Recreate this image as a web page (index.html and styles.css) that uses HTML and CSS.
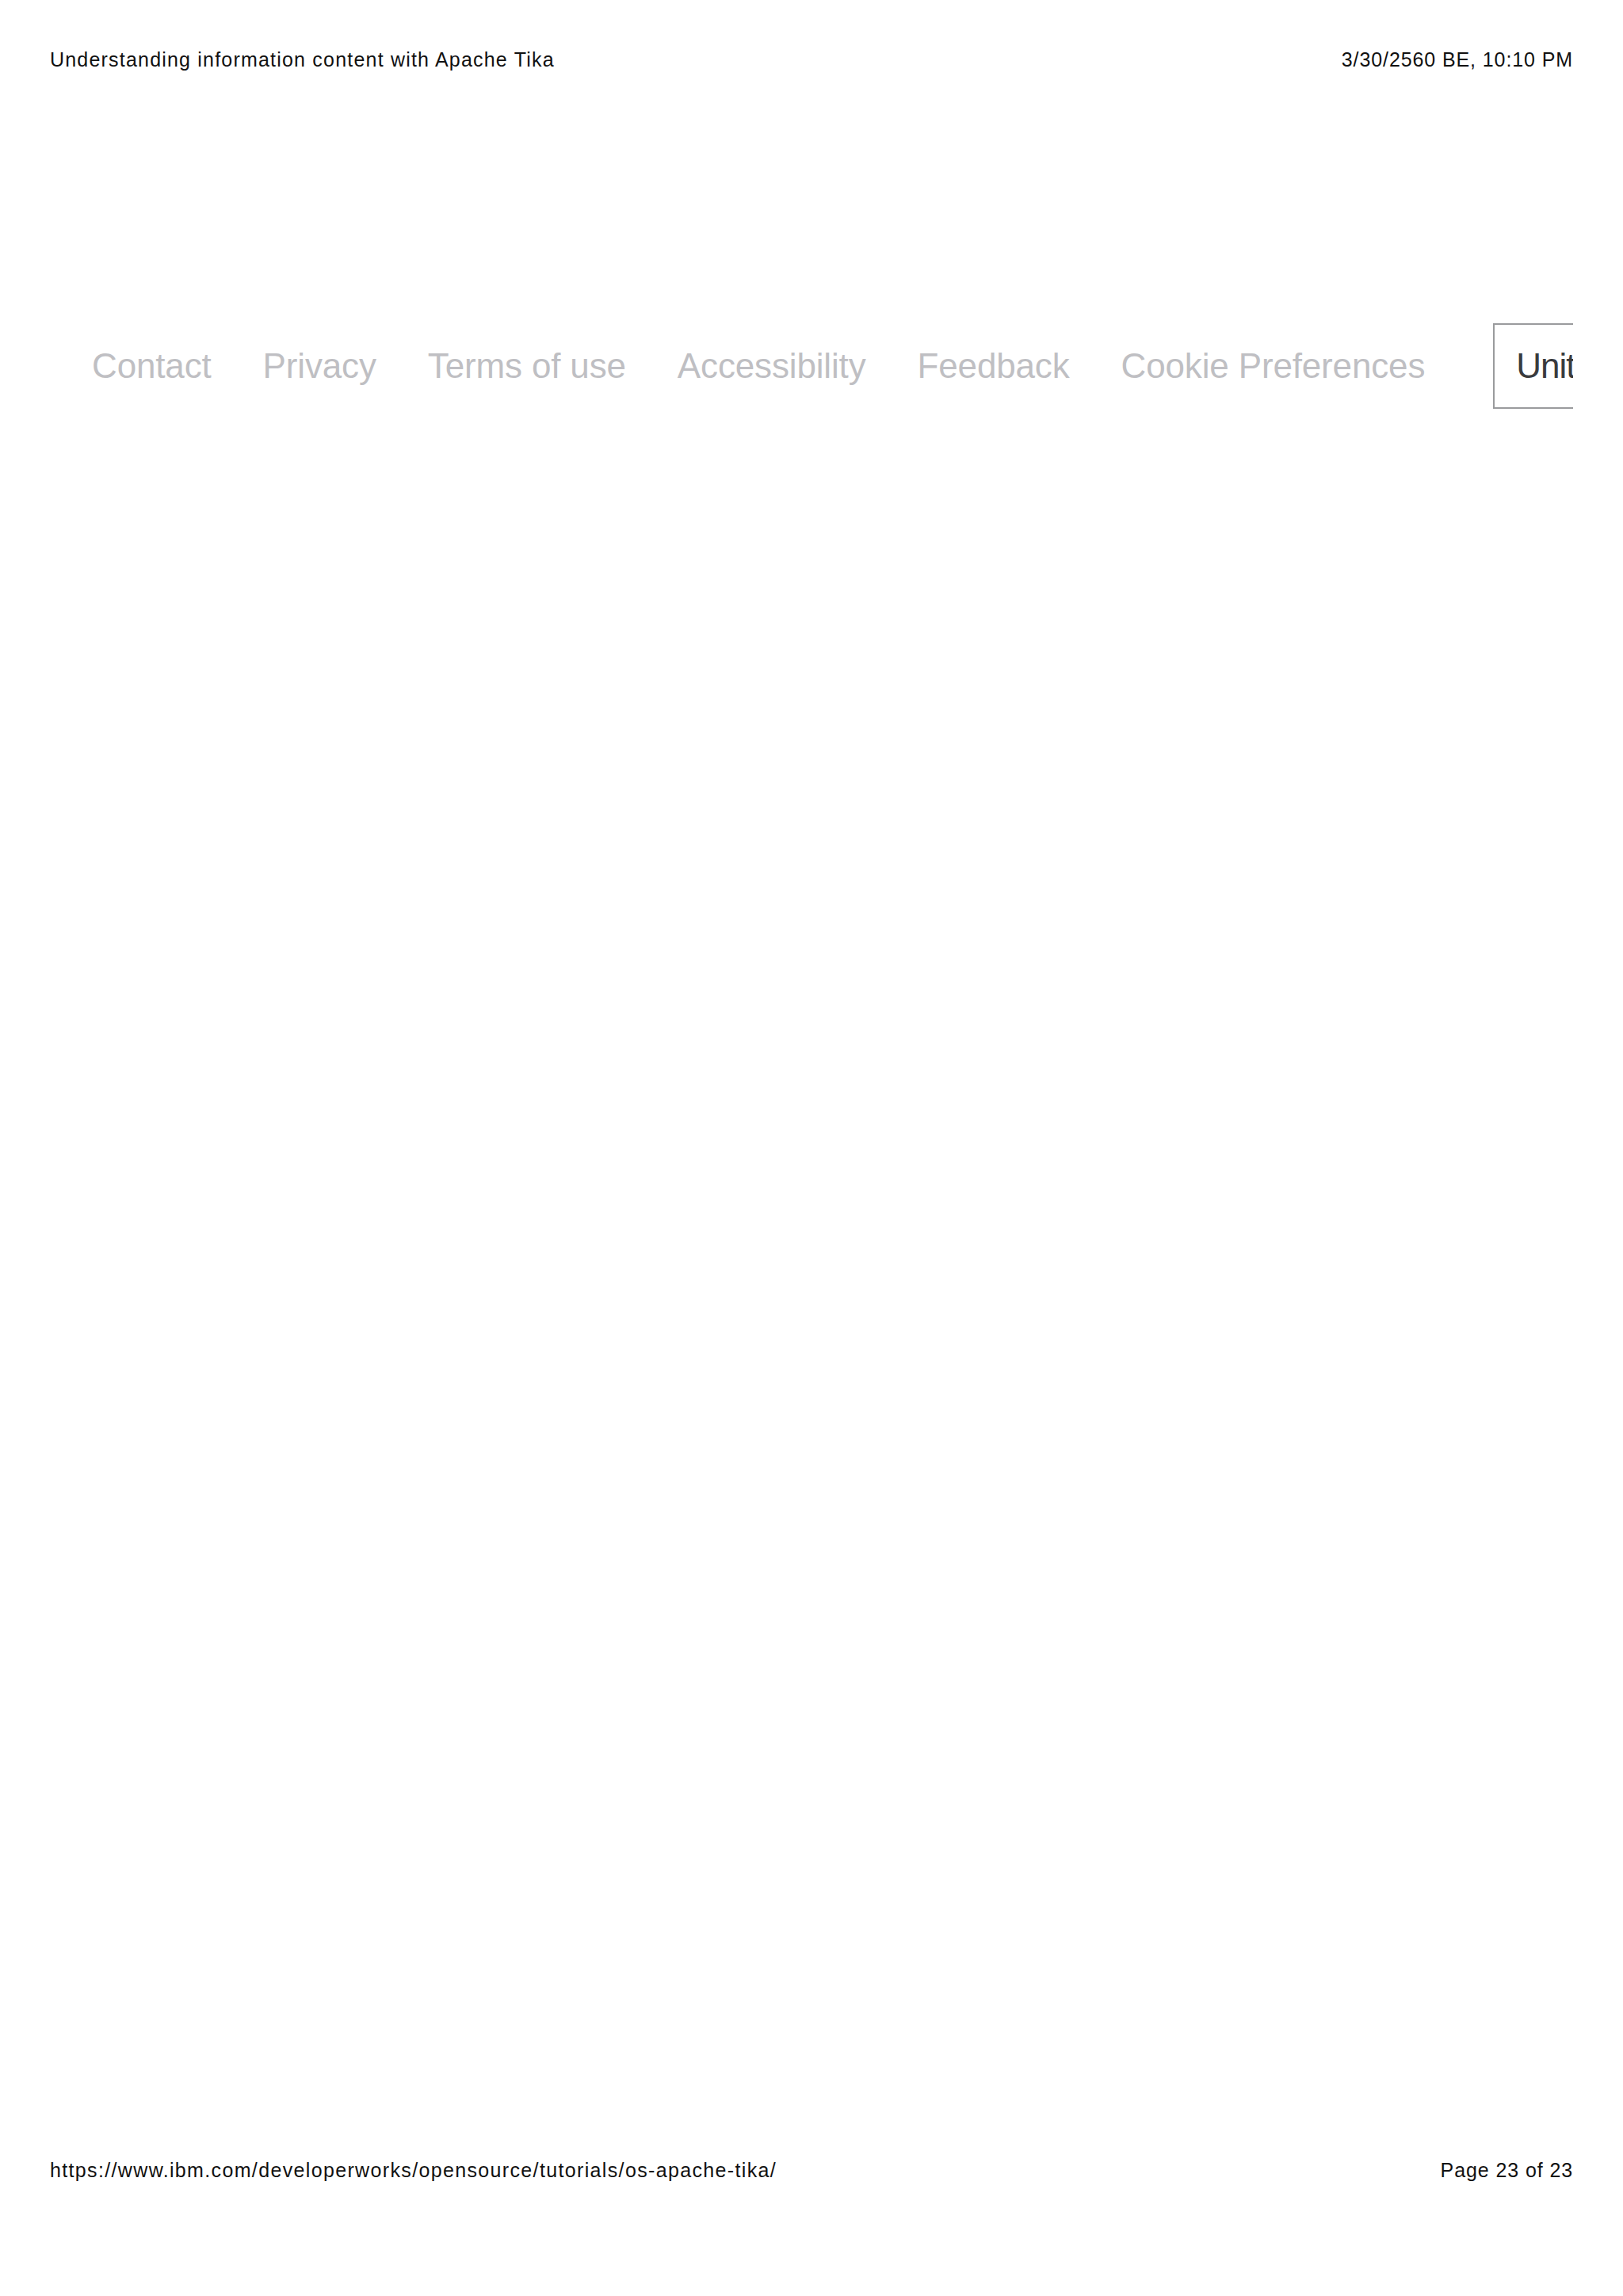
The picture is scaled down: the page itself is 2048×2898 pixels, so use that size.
FILE: index.html
```html
<!DOCTYPE html>
<html lang="en">
<head>
<meta charset="utf-8">
<title>Understanding information content with Apache Tika</title>
<link rel="stylesheet" href="styles.css">
</head>
<body>
<div class="page">
  <header class="print-header">
    <span class="print-title">Understanding information content with Apache Tika</span>
    <span class="print-date">3/30/2560 BE, 10:10 PM</span>
  </header>
  <main class="content">
    <nav class="footer-links">
      <a class="footer-link" href="#">Contact</a>
      <a class="footer-link" href="#">Privacy</a>
      <a class="footer-link" href="#">Terms of use</a>
      <a class="footer-link" href="#">Accessibility</a>
      <a class="footer-link" href="#">Feedback</a>
      <a class="footer-link" href="#">Cookie Preferences</a>
      <div class="locale-select">United States — English</div>
    </nav>
  </main>
  <footer class="print-footer">
    <span class="print-url">https://www.ibm.com/developerworks/opensource/tutorials/os-apache-tika/</span>
    <span class="print-page">Page 23 of 23</span>
  </footer>
</div>
</body>
</html>
```
FILE: styles.css
```css
html, body {
  margin: 0;
  padding: 0;
  background: #ffffff;
}

.page {
  width: 2048px;
  height: 2898px;
  box-sizing: border-box;
  padding: 60px 63px 144px 63px;
  display: flex;
  flex-direction: column;
  font-family: "Liberation Sans", Arial, sans-serif;
}

.print-header,
.print-footer {
  display: flex;
  justify-content: space-between;
  font-size: 25px;
  line-height: 30px;
  letter-spacing: 1.2px;
  color: #111;
  white-space: nowrap;
}

.print-date,
.print-page {
  letter-spacing: 0.9px;
}

.print-url {
  letter-spacing: 1.35px;
}

.content {
  margin-top: 318px;
  overflow: hidden;
}

.footer-links {
  display: flex;
  align-items: center;
  padding-left: 53px;
  gap: 65px;
  white-space: nowrap;
}

.footer-link {
  font-size: 44px;
  letter-spacing: -0.15px;
  color: #bfbfc3;
  text-decoration: none;
}

.locale-select {
  margin-left: 21px;
  flex-shrink: 0;
  height: 108px;
  box-sizing: border-box;
  border: 2px solid #9a9b9d;
  padding: 0 27px;
  display: flex;
  align-items: center;
  font-size: 44px;
  letter-spacing: -1px;
  color: #3a3b3d;
}

.print-footer {
  margin-top: auto;
}
```
